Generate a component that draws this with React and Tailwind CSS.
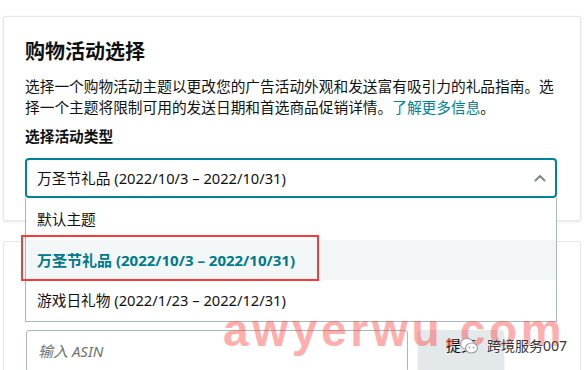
const FONT = { fontFamily: '"Noto Sans", "Noto Sans CJK SC", sans-serif' }

const OPTIONS = [
  { label: '默认主题', h: 'h-[42px]' },
  { label: '万圣节礼品 (2022/10/3 – 2022/10/31)', h: 'h-[40px]', active: true },
  { label: '游戏日礼物 (2022/1/23 – 2022/12/31)', h: 'h-[41px]' },
]

function ChevronUp() {
  return (
    <svg width="12" height="8" viewBox="0 0 12 8" fill="none">
      <path d="M1.5 6.5 L6 2 L10.5 6.5" stroke="#7d878a" strokeWidth="2" strokeLinecap="round" strokeLinejoin="round" />
    </svg>
  )
}

function WeChatMark() {
  return (
    <svg width="20" height="18" viewBox="0 0 20 18" fill="none">
      <ellipse cx="8" cy="7" rx="6.5" ry="5.5" fill="white" stroke="#9aa3a6" strokeWidth="1.2" />
      <ellipse cx="12.5" cy="11" rx="6" ry="5" fill="white" stroke="#9aa3a6" strokeWidth="1.2" />
      <circle cx="10.5" cy="10.5" r="0.9" fill="#9aa3a6" />
      <circle cx="14.5" cy="10.5" r="0.9" fill="#9aa3a6" />
    </svg>
  )
}

export default function App() {
  return (
    <div className="relative w-[584px] h-[370px] overflow-hidden bg-white text-[#0f1111]" style={FONT}>
      {/* campaign card */}
      <div className="ml-[3px] w-[578px] mt-[16px] border border-[#e3e7e8] rounded-[2px] shadow-[0_1px_3px_rgba(0,0,0,0.1)] pl-[21px] pr-[23px] pt-[21px] pb-[22px]">
        <h2 className="text-[20px] leading-[28px] font-bold">购物活动选择</h2>
        <p className="mt-[10px] text-[14.7px] leading-[21px]">
          选择一个购物活动主题以更改您的广告活动外观和发送富有吸引力的礼品指南。选
          <br />
          择一个主题将限制可用的发送日期和首选商品促销详情。
          <span className="text-[#00819a]">了解更多信息</span>。
        </p>
        <div className="mt-[8px] text-[14.7px] leading-[20px] font-bold">选择活动类型</div>

        <div className="relative mt-[12px] z-10">
          <div className="h-[40px] border-2 border-[#00829a] rounded-[4px] flex items-center justify-between pl-[10px] pr-[9px] bg-white">
            <span className="text-[14.7px]">万圣节礼品 (2022/10/3 – 2022/10/31)</span>
            <ChevronUp />
          </div>
          <div className="absolute top-full left-0 right-0 border border-t-0 border-[#aab7b8] bg-white">
            {OPTIONS.map((o) => (
              <div
                key={o.label}
                className={`${o.h} flex items-center pl-[11px] ${o.active ? 'bg-[#f2f6f6] text-[#00798c] font-bold text-[15px]' : 'text-[14.7px]'}`}
              >
                {o.label}
              </div>
            ))}
          </div>
        </div>
      </div>

      {/* product card (mostly hidden under the dropdown) */}
      <div className="ml-[3px] w-[578px] mt-[20px] h-[160px] border border-[#e3e7e8] rounded-[2px] pl-[22px] pt-[88px]">
        <div className="flex gap-[10px]">
          <div className="w-[382px] h-[42px] border border-[#aab7b8] rounded-[3px] flex items-center pl-[11px]">
            <span className="text-[15px] italic text-[#6f7373]">输入 ASIN</span>
          </div>
          <div className="w-[86px] h-[42px] rounded-[4px] bg-[#e3e9ea] shadow-[0_1px_2px_rgba(0,0,0,0.15)] flex items-start justify-center pt-[4px] text-[15px]">
            提交
          </div>
        </div>
      </div>

      {/* annotation */}
      <div className="absolute z-20 left-[21px] top-[235px] w-[298px] h-[46px] border-2 border-[#f93a3a]" />

      {/* watermark */}
      <div
        className="absolute z-20 left-[223px] top-[300px] text-[46px] leading-[60px] font-bold tracking-[3.7px] text-[rgba(255,70,70,0.45)]"
        style={{ fontFamily: '"Liberation Sans", sans-serif' }}
      >
        awyerwu.com
      </div>
      <div className="absolute z-20 left-[459px] top-[335px] flex items-center gap-[8px]">
        <WeChatMark />
        <span className="text-[14px] text-[#333] [text-shadow:0_0_2px_white]">跨境服务007</span>
      </div>
    </div>
  )
}
